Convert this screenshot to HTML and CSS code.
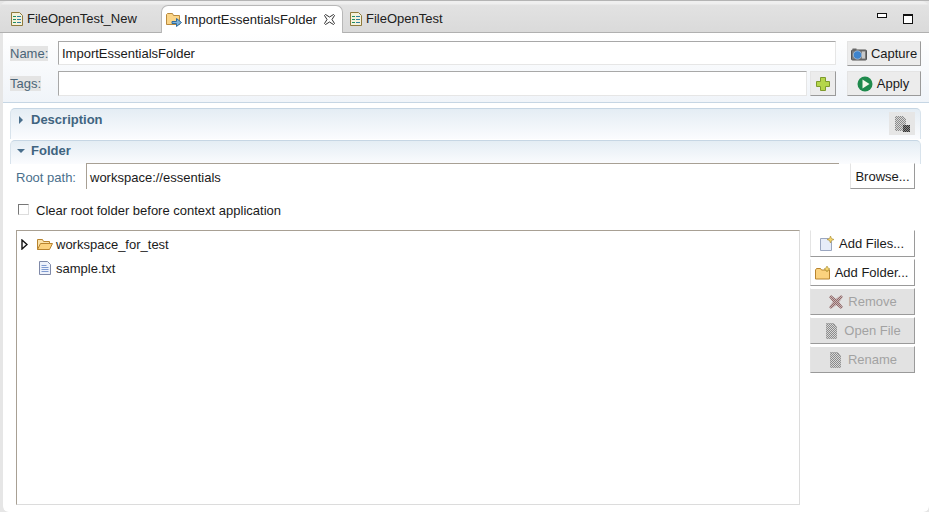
FILE: index.html
```html
<!DOCTYPE html>
<html>
<head>
<meta charset="utf-8">
<title>ImportEssentialsFolder</title>
<link rel="stylesheet" href="styles.css">
</head>
<body>
<svg class="defs" width="0" height="0"><defs>
  <pattern id="dots" width="2" height="2" patternUnits="userSpaceOnUse"><rect width="2" height="2" fill="#d8d8d8"/><rect width="1" height="1" fill="#8a8a8a"/><rect x="1" y="1" width="1" height="1" fill="#8a8a8a"/></pattern>
  <pattern id="dark" width="2" height="2" patternUnits="userSpaceOnUse"><rect width="2" height="2" fill="#888"/><rect width="1" height="1" fill="#333"/><rect x="1" y="1" width="1" height="1" fill="#333"/></pattern>
  <pattern id="red" width="2" height="2" patternUnits="userSpaceOnUse"><rect width="2" height="2" fill="#c9b4b4"/><rect width="1" height="1" fill="#8f6a6a"/><rect x="1" y="1" width="1" height="1" fill="#8f6a6a"/></pattern>
</defs></svg>
<div class="frame">
  <div class="tabbar">
    <div class="tab t1">
      <svg class="ic" viewBox="0 0 16 16"><path d="M2.500 1.500h8l3 3v10h-11z" fill="#f4f2dc" stroke="#8f7a3c"/><path d="M4 5.500h3M4 8.500h3M4 11.500h3" stroke="#1f8f5f"/><path d="M8 5.500h4M8 8.500h4M8 11.500h4" stroke="#2f7fa0"/></svg>
      <span>FileOpenTest_New</span>
    </div>
    <div class="tab active">
      <svg class="ic18" viewBox="0 0 18 16"><path d="M1.500 12.500v-10l1-1h5l1 2h6v9z" fill="#fbd588" stroke="#b98a3e"/><path d="M7 9.500h4.500v-3l5 4-5 4v-3H7z" fill="#7fb3dc" stroke="#2f6d9e"/></svg>
      <span class="tlabel">ImportEssentialsFolder</span>
      <svg class="close" viewBox="0 0 11 11"><path d="M1.500.5l4 2.500 4-2.500 1 1-2.500 4 2.500 4-1 1-4-2.500-4 2.500-1-1L3 5.500l-2.500-4z" fill="#fff" stroke="#333"/></svg>
    </div>
    <div class="tab t3">
      <svg class="ic" viewBox="0 0 16 16"><path d="M2.500 1.500h8l3 3v10h-11z" fill="#f4f2dc" stroke="#8f7a3c"/><path d="M4 5.500h3M4 8.500h3M4 11.500h3" stroke="#1f8f5f"/><path d="M8 5.500h4M8 8.500h4M8 11.500h4" stroke="#2f7fa0"/></svg>
      <span>FileOpenTest</span>
    </div>
    <div class="winctl">
      <span class="min"></span>
      <span class="max"></span>
    </div>
  </div>
  <div class="body">
    <div class="head">
      <div class="row r1">
        <span class="hl name-l">Name:</span>
        <div class="field grow"><span>ImportEssentialsFolder</span></div>
        <button class="btn top-btn"><svg class="ic" viewBox="0 0 16 13"><rect x="0.500" y="2.500" width="15" height="10" rx="1" fill="#7a7a7a" stroke="#555"/><rect x="1.500" y="1" width="4" height="2" fill="#666"/><rect x="11" y="4" width="3" height="7" fill="#c8c8c8"/><circle cx="6.500" cy="7.500" r="4.200" fill="#3f84cc" stroke="#ccd6e0" stroke-width=".6"/></svg><span>Capture</span></button>
      </div>
      <div class="row r2">
        <span class="hl tags-l">Tags:</span>
        <div class="field grow tall"></div>
        <button class="btn plus"><svg class="ic" viewBox="0 0 16 16"><path d="M5.500 1.500h5v4h4v5h-4v4h-5v-4h-4v-5h4z" fill="#b5d64a" stroke="#7e9a2c"/></svg></button>
        <button class="btn top-btn apply"><svg class="ic" viewBox="0 0 16 16"><circle cx="8" cy="8" r="7.500" fill="#1f8a4c"/><path d="M5.500 3.500l7 4.500-7 4.500z" fill="#f4f8e8"/></svg><span>Apply</span></button>
      </div>
    </div>
    <div class="sec sec-d">
      <svg class="tw" viewBox="0 0 8 10"><path d="M2 1l4 4-4 4z" fill="#4a6f8c"/></svg>
      <span class="sec-t">Description</span>
      <span class="sec-act"><svg class="ic" viewBox="0 0 16 16"><path d="M1 0h8l3 3v12H1z" fill="url(#dots)"/><rect x="9" y="9" width="7" height="7" fill="url(#dark)"/></svg></span>
    </div>
    <div class="sec sec-f">
      <svg class="tw" viewBox="0 0 10 8"><path d="M1 2h8l-4 4z" fill="#4a6f8c"/></svg>
      <span class="sec-t">Folder</span>
    </div>
    <div class="root">
      <span class="root-l">Root path:</span>
      <div class="rfield"><span>workspace://essentials</span></div>
      <button class="btn browse">Browse...</button>
    </div>
    <label class="chk"><span class="box"></span><span>Clear root folder before context application</span></label>
    <div class="main">
      <div class="tree">
        <div class="node n1">
          <svg class="arrow" viewBox="0 0 7 11"><path d="M1 1l5 4.500-5 4.500z" fill="#fff" stroke="#111" stroke-width="1.400"/></svg>
          <svg class="ic fold" viewBox="0 0 16 13"><path d="M0.500 11.500V1.500h5l1 2h6v2" fill="#fbe2a8" stroke="#b8842e"/><path d="M0.500 11.500l3-6h12l-3 6z" fill="#fbd27e" stroke="#b8842e"/></svg>
          <span>workspace_for_test</span>
        </div>
        <div class="node n2">
          <svg class="ic" viewBox="0 0 16 16"><path d="M2.500 1.500h8l3 3v10h-11z" fill="#eef2fb" stroke="#7f89a8"/><path d="M4.500 5.500h5M4.500 7.500h7M4.500 9.500h7M4.500 11.500h7" stroke="#7f9ad0"/></svg>
          <span>sample.txt</span>
        </div>
      </div>
      <div class="side">
        <button class="btn sb"><svg class="ic" viewBox="0 0 16 16"><path d="M1.500 2.500h8l3 3v9h-11z" fill="#e6ecf8" stroke="#9aa6c0"/><path d="M11.500 0l1 2.500 2.500 1-2.500 1-1 2.500-1-2.500-2.500-1 2.500-1z" fill="#f5d36a" stroke="#a58a30" stroke-width=".6"/></svg><span>Add Files...</span></button>
        <button class="btn sb"><svg class="ic" viewBox="0 0 16 14"><path d="M.500 13V4l1-1.500h4l1 1.500h8V13z" fill="#fbd27e" stroke="#b8842e"/><path d="M12 0l1 2 2 1-2 1-1 2-1-2-2-1 2-1z" fill="#f5d36a" stroke="#a58a30" stroke-width=".6"/></svg><span>Add Folder...</span></button>
        <button class="btn sb off"><svg class="ic" viewBox="0 0 16 16"><path d="M3 1l5 4 5-4 2 2-4 5 4 5-2 2-5-4-5 4-2-2 4-5-4-5z" fill="url(#red)"/></svg><span>Remove</span></button>
        <button class="btn sb off"><svg class="ic" viewBox="0 0 16 16"><path d="M2.500 .5h7l3 3v12h-10z" fill="url(#dots)" stroke="#8a8a8a" stroke-dasharray="1 1"/></svg><span>Open File</span></button>
        <button class="btn sb off"><svg class="ic" viewBox="0 0 16 16"><path d="M2.500 .5h7l3 3v12h-10z" fill="url(#dots)" stroke="#8a8a8a" stroke-dasharray="1 1"/></svg><span>Rename</span></button>
      </div>
    </div>
  </div>
</div>
</body>
</html>
```
FILE: styles.css
```css
* { box-sizing: border-box; }
html, body { margin: 0; padding: 0; }
body {
  width: 929px;
  height: 512px;
  overflow: hidden;
  background: #e3e3e3;
  font-family: "Liberation Sans", sans-serif;
  font-size: 13px;
  color: #1a1a1a;
}
.defs { position: absolute; }
.frame { height: 512px; display: flex; flex-direction: column; border-top: 1px solid #b4b4b4; background: #e6e6e6; }
.tabbar {
  height: 32px;
  flex: none;
  display: flex;
  align-items: flex-end;
  background: linear-gradient(#efefef 0, #efefef 3px, #e2e2e2 4px, #dadada 100%);
  border-bottom: 1px solid #b0b0b0;
  border-radius: 8px 8px 0 0;
  padding-left: 3px;
  padding-right: 14px;
}
.tab { height: 27px; display: flex; align-items: center; white-space: nowrap; color: #202020; }
.t1 { width: 158px; padding-left: 6px; gap: 2px; }
.t3 { width: 120px; padding-left: 5px; gap: 2px; }
.active {
  width: 182px;
  height: 28px;
  margin-bottom: -1px;
  background: #fff;
  border: 1px solid #b8b8b8;
  border-bottom: 0;
  border-radius: 7px 7px 0 0;
  padding-left: 3px;
  z-index: 1;
}
.tlabel { margin-left: 1px; }
.ic { width: 16px; height: 16px; flex: none; }
.ic18 { width: 18px; height: 16px; flex: none; }
.close { width: 11px; height: 11px; margin-left: 7px; }
.winctl { margin-left: auto; height: 27px; display: flex; align-items: center; gap: 16px; }
.min { width: 10px; height: 5px; border: 1px solid #111; background: #fff; margin-top: -6px; }
.max { width: 10px; height: 10px; border: 1px solid #111; border-top-width: 2px; background: #fff; margin-right: 2px; }
.body {
  flex: 1;
  margin: 0 0 0 3px;
  background: #fff;
  border-radius: 0 0 6px 6px;
  min-height: 0;
  display: flex;
  flex-direction: column;
}
.head {
  background: linear-gradient(#fff, #f0f4f9);
  padding: 8px 8px 0 7px;
  height: 70px;
  border-bottom: 1px solid #c6d6e4;
  flex: none;
}
.row { display: flex; align-items: flex-start; }
.r1 { height: 30px; }
.hl { background: #e4e4e4; color: #4a6478; line-height: 15px; height: 15px; margin-top: 5px; flex: none; }
.name-l { width: 38px; margin-right: 10px; }
.tags-l { width: 31px; margin-right: 17px; }
.field {
  height: 24px;
  background: #fff;
  border-top: 1px solid #a8a8a8;
  border-left: 1px solid #a8a8a8;
  border-right: 1px solid #e6e6e6;
  border-bottom: 1px solid #e6e6e6;
  padding-left: 3px;
  line-height: 23px;
}
.grow { flex: 1; }
.tall { height: 25px; }
.btn {
  font: inherit;
  color: #1a1a1a;
  background: #ececec;
  border: 1px solid #fff;
  border-right-color: #9a9a9a;
  border-bottom-color: #9a9a9a;
  border-top-color: #e4e4e4;
  border-left-color: #e4e4e4;
  display: flex;
  align-items: center;
  justify-content: center;
  gap: 4px;
  padding: 0;
  white-space: nowrap;
}
.top-btn { width: 74px; height: 25px; margin-left: 11px; gap: 4px; flex: none; }
.apply { padding-right: 2px; }
.plus { width: 26px; height: 25px; margin-left: 3px; flex: none; }
.sec {
  margin: 5px 8px 0 7px;
  background: linear-gradient(#e4edf4, #fbfcfe);
  border-top: 1px solid #c6d6e4;
  border-left: 1px solid #d8e3ec;
  border-right: 1px solid #d8e3ec;
  border-radius: 5px 5px 0 0;
  display: flex;
  align-items: flex-start;
  flex: none;
}
.sec-d { height: 31px; }
.sec-f { height: 24px; margin-top: 1px; }
.tw { width: 10px; height: 10px; margin: 5px 0 0 5px; flex: none; }
.sec-d .tw { margin-top: 6px; }
.sec-t { font-weight: bold; color: #3f6480; margin-left: 5px; line-height: 20px; }
.sec-d .sec-t { line-height: 22px; }
.sec-act { margin: 3px 5px 0 auto; width: 26px; height: 23px; background: #e6e6e6; display: flex; align-items: center; justify-content: center; }
.root { display: flex; align-items: flex-start; padding: 0 14px 0 13px; height: 27px; flex: none; margin-top: -1px; }
.root-l { color: #4a6f8c; margin-top: 7px; width: 70px; flex: none; }
.rfield {
  flex: 1;
  height: 26px;
  border-top: 1px solid #a8a094;
  border-left: 1px solid #a8a094;
  padding-left: 3px;
  line-height: 28px;
}
.browse { width: 65px; height: 26px; margin-left: 11px; background: #fff; border-top-color: #fff; border-left-color: #e4e4e4; flex: none; }
.chk { display: flex; align-items: center; height: 16px; margin: 12px 0 0 15px; gap: 7px; flex: none; }
.box { width: 11px; height: 11px; border-top: 1px solid #777; border-left: 1px solid #777; border-right: 1px solid #ddd; border-bottom: 1px solid #ddd; background: #fff; margin-top: -2px; }
.main { display: flex; padding: 12px 14px 0 13px; flex: none; }
.tree {
  width: 784px;
  height: 275px;
  border-top: 1px solid #a8a094;
  border-left: 1px solid #a8a094;
  border-right: 1px solid #dcdcdc;
  border-bottom: 1px solid #dcdcdc;
  flex: none;
}
.node { display: flex; align-items: center; height: 24px; }
.n1 { padding-left: 4px; margin-top: 1px; }
.arrow { width: 7px; height: 11px; flex: none; }
.fold { margin-left: 9px; height: 13px; margin-right: 3px; }
.n2 { padding-left: 20px; gap: 3px; }
.side { width: 105px; margin-left: 10px; display: flex; flex-direction: column; gap: 2px; flex: none; }
.sb { height: 27px; background: #fff; border-top-color: #fff; }
.sb:nth-child(-n+2) { padding-right: 2px; }
.off { background: #e2e2e2; color: #a2a2a2; height: 27px; }
```
